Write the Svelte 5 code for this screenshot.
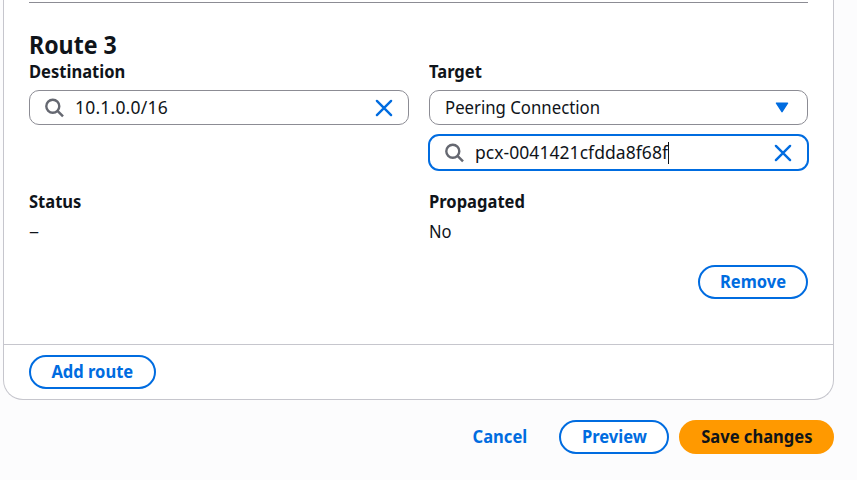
<script>
  let destination = '10.1.0.0/16';
  let target = 'pcx-0041421cfdda8f68f';
</script>

{#snippet search()}
  <svg class="search" width="20" height="20" viewBox="0 0 20 20" fill="none" stroke="#656871" stroke-width="2.4">
    <circle cx="7.8" cy="8.2" r="6.5" />
    <path d="M12.5 12.9L18 18.4" />
  </svg>
{/snippet}

{#snippet cross()}
  <svg class="cross" width="18" height="18" viewBox="0 0 18 18" fill="none" stroke="#006ce0" stroke-width="2.4" stroke-linecap="round">
    <path d="M1.9 1.9L16.1 16.1M16.1 1.9L1.9 16.1" />
  </svg>
{/snippet}

<main>
  <section class="card">
    <div class="body">
      <hr />
      <h2><span class="narrow">Route 3</span></h2>
      <div class="columns">
        <div class="col">
          <div class="label"><span class="narrow">Destination</span></div>
          <div class="field">
            {@render search()}
            <span class="value digits">{destination}</span>
            {@render cross()}
          </div>
        </div>
        <div class="col">
          <div class="label"><span class="narrow">Target</span></div>
          <div class="field select">
            <span class="value narrow">Peering Connection</span>
            <svg class="caret" width="14" height="11" viewBox="0 0 14 11"><path d="M1.5 1.2H12.5L7 9.7Z" fill="#006ce0" stroke="#006ce0" stroke-width="1.5" stroke-linejoin="round" /></svg>
          </div>
          <div class="field active">
            {@render search()}
            <span class="value pcx">{target}</span><i class="cursor"></i>
            {@render cross()}
          </div>
        </div>
      </div>
      <div class="columns info">
        <div class="col">
          <div class="label"><span class="narrow">Status</span></div>
          <div class="plain"><span class="dash">–</span></div>
        </div>
        <div class="col">
          <div class="label"><span class="narrow">Propagated</span></div>
          <div class="plain"><span class="narrow">No</span></div>
        </div>
      </div>
      <div class="right"><button style:width="110px"><span>Remove</span></button></div>
    </div>
    <footer><button style:width="127px"><span>Add route</span></button></footer>
  </section>
  <div class="actions">
    <button class="link"><span>Cancel</span></button>
    <button style:width="110px"><span>Preview</span></button>
    <button class="primary"><span>Save changes</span></button>
  </div>
</main>

<style>
  :global(body) { background: #fcfcfd; overflow: hidden; }
  main { box-sizing: border-box; width: 857px; height: 480px; padding: 0 23px 0 3px; font: 17.5px/25px 'Noto Sans', 'Open Sans', sans-serif; color: #0f141a; }
  .card { box-sizing: border-box; height: 400px; background: #fff; border: 1px solid #c6c6cd; border-top: 0; border-radius: 0 0 20px 20px; }
  .body { box-sizing: border-box; height: 344px; padding: 2px 25px 0; }
  hr { height: 1px; margin: 0; border: 0; background: #8c8c94; }
  h2 { margin: 26px 0 0; font-size: 25px; line-height: 30px; font-weight: 700; }
  .narrow { display: inline-block; transform: scaleX(0.945); transform-origin: left; }
  h2 .narrow { transform: scaleX(0.925); }
  .columns { display: flex; gap: 20px; }
  .col { width: 380px; flex: none; }
  .col + .col { width: 379px; }
  .label { font-weight: 700; }
  .field { box-sizing: border-box; display: flex; align-items: center; height: 35px; margin-top: 6px; padding: 0 15px; border: 1px solid #8c8c94; border-radius: 10px; background: #fff; }
  .select .value { transform: scaleX(0.957); margin-left: -0.5px; }
  .search { margin-right: 10px; flex: none; }
  .digits { letter-spacing: 0.2px; }
  .pcx { letter-spacing: 0.05px; }
  .cross { margin-left: auto; flex: none; }
  .caret { margin-left: auto; margin-right: 3px; }
  .active { height: 37px; margin: 9px -1px 0; border: 2px solid #006ce0; border-radius: 11px; }
  .cursor { width: 1px; height: 22px; background: #0f141a; }
  .info { margin-top: 18px; }
  .plain { margin-top: 5px; }
  .dash { display: inline-block; transform: scaleX(1.15); transform-origin: left; }
  .right { display: flex; justify-content: flex-end; margin-top: 21px; }
  button { box-sizing: border-box; height: 34px; padding: 0 0 2px; border: 2px solid #006ce0; border-radius: 17px; background: #fff; color: #006ce0; font: 700 17.5px/25px 'Noto Sans', sans-serif; }
  button span { display: inline-block; transform: scaleX(0.945); }
  footer { border-top: 1px solid #c6c6cd; padding: 10px 25px; }
  .actions { display: flex; justify-content: flex-end; gap: 10px; margin-top: 20px; }
  .link { width: 98px; border-color: transparent; background: none; }
  .primary { width: 155px; border-color: #f90; background: #f90; color: #0f141a; }
</style>
